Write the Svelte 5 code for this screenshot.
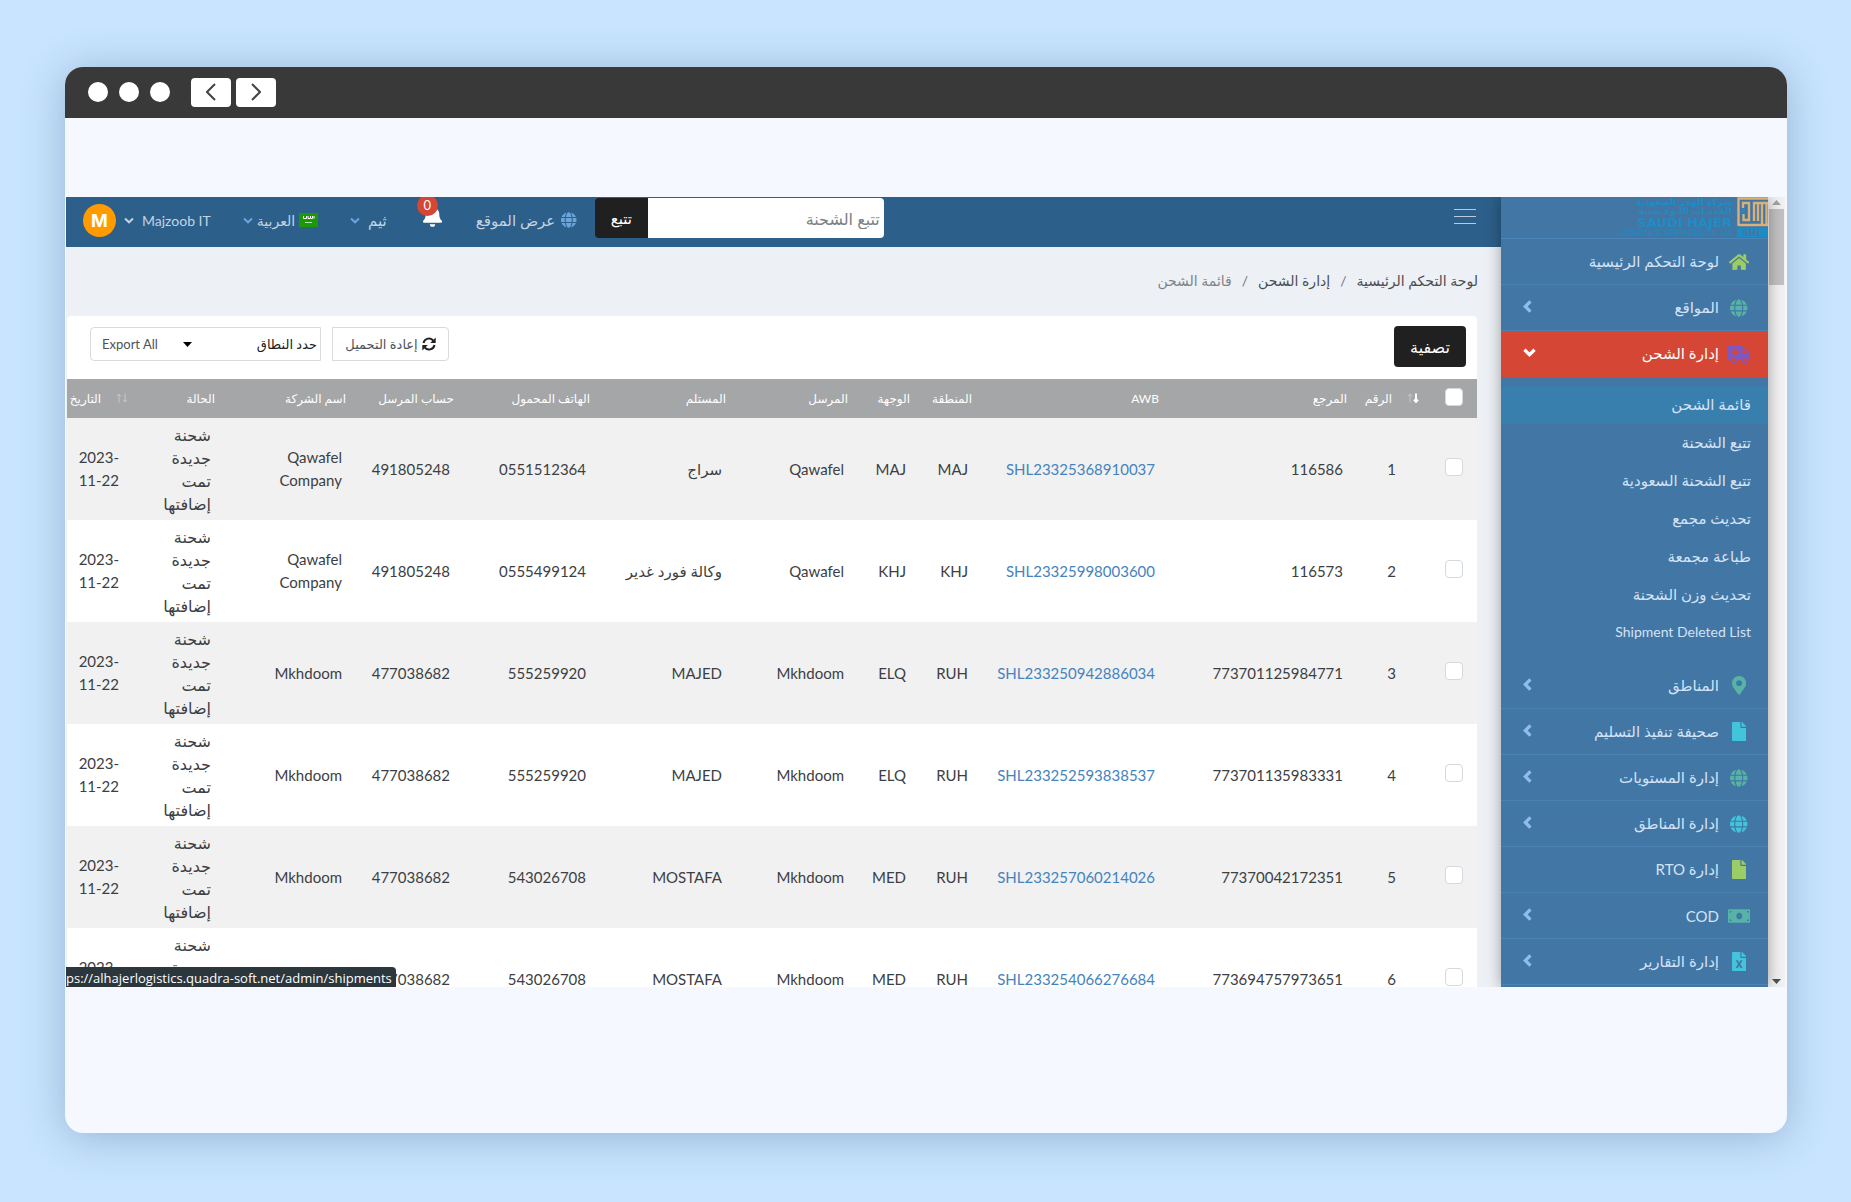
<script>
  const icons = {
    home: { box: '0 0 576 512', d: 'M280.37 148.26L96 300.11V464a16 16 0 0 0 16 16l112.06-.29a16 16 0 0 0 15.92-16V368a16 16 0 0 1 16-16h64a16 16 0 0 1 16 16v95.64a16 16 0 0 0 16 16.05L464 480a16 16 0 0 0 16-16V300L295.67 148.26a12.19 12.19 0 0 0-15.3 0zM571.6 251.47L488 182.56V44.05a12 12 0 0 0-12-12h-56a12 12 0 0 0-12 12v72.61L318.47 43a48 48 0 0 0-61 0L4.34 251.47a12 12 0 0 0-1.6 16.9l25.5 31A12 12 0 0 0 45.15 301l235.22-193.74a12.19 12.19 0 0 1 15.3 0L530.9 301a12 12 0 0 0 16.9-1.6l25.5-31a12 12 0 0 0-1.7-16.93z' },
    globe: { box: '0 0 496 512', d: 'M336.5 160C322 70.7 287.8 8 248 8s-74 62.7-88.5 152h177zM152 256c0 22.2 1.2 43.5 3.3 64h185.3c2.1-20.5 3.3-41.8 3.3-64s-1.2-43.5-3.3-64H155.3c-2.1 20.5-3.3 41.8-3.3 64zm324.7-96c-28.6-67.9-86.5-120.4-158-141.6 24.4 33.8 41.2 84.7 50 141.6h108zM177.2 18.4C105.8 39.6 47.8 92.1 19.3 160h108c8.7-56.9 25.5-107.8 49.9-141.6zM487.4 192H372.7c2.1 21 3.3 42.5 3.3 64s-1.2 43-3.3 64h114.6c5.5-20.5 8.6-41.8 8.6-64s-3.1-43.5-8.5-64zM120 256c0-21.5 1.2-43 3.3-64H8.6C3.2 212.5 0 233.8 0 256s3.2 43.5 8.6 64h114.6c-2-21-3.2-42.5-3.2-64zm39.5 96c14.5 89.3 48.7 152 88.5 152s74-62.7 88.5-152h-177zm159.3 141.6c71.4-21.2 129.4-73.7 158-141.6h-108c-8.8 56.9-25.6 107.8-50 141.6zM19.3 352c28.6 67.9 86.5 120.4 158 141.6-24.4-33.8-41.2-84.7-50-141.6h-108z' },
    ambulance: { box: '0 0 640 512', d: 'M624 352h-16V243.9c0-12.7-5.1-24.9-14.1-33.9L494 110.1c-9-9-21.2-14.1-33.9-14.1H416V48c0-26.5-21.5-48-48-48H48C21.5 0 0 21.5 0 48v320c0 26.5 21.5 48 48 48h16c0 53 43 96 96 96s96-43 96-96h128c0 53 43 96 96 96s96-43 96-96h48c8.8 0 16-7.2 16-16v-32c0-8.8-7.2-16-16-16zM160 464c-26.5 0-48-21.5-48-48s21.5-48 48-48 48 21.5 48 48-21.5 48-48 48zm144-248c0 4.4-3.6 8-8 8h-56v56c0 4.4-3.6 8-8 8h-48c-4.4 0-8-3.6-8-8v-56h-56c-4.4 0-8-3.6-8-8v-48c0-4.4 3.6-8 8-8h56v-56c0-4.4 3.6-8 8-8h48c4.4 0 8 3.6 8 8v56h56c4.4 0 8 3.6 8 8v48zm176 248c-26.5 0-48-21.5-48-48s21.5-48 48-48 48 21.5 48 48-21.5 48-48 48zm80-208H416V144h44.1l99.9 99.9V256z' },
    pin: { box: '0 0 384 512', d: 'M172.268 501.67C26.97 291.031 0 269.413 0 192 0 85.961 85.961 0 192 0s192 85.961 192 192c0 77.413-26.97 99.031-172.268 309.67-9.535 13.774-29.93 13.773-39.464 0zM192 272c44.183 0 80-35.817 80-80s-35.817-80-80-80-80 35.817-80 80 35.817 80 80 80z' },
    file: { box: '0 0 384 512', d: 'M224 136V0H24C10.7 0 0 10.7 0 24v464c0 13.3 10.7 24 24 24h336c13.3 0 24-10.7 24-24V160H248c-13.2 0-24-10.8-24-24zm160-14.1v6.1H256V0h6.1c6.4 0 12.5 2.5 17 7l97.9 98c4.5 4.5 7 10.6 7 16.9z' },
    excel: { box: '0 0 384 512', d: 'M224 136V0H24C10.7 0 0 10.7 0 24v464c0 13.3 10.7 24 24 24h336c13.3 0 24-10.7 24-24V160H248c-13.2 0-24-10.8-24-24zM100 224h56l36 64 36-64h56l-62 100 62 108h-56l-36-68-36 68h-56l62-108zM384 121.9v6.1H256V0h6.1c6.4 0 12.5 2.5 17 7l97.9 98c4.5 4.5 7 10.6 7 16.9z' },
    money: { box: '0 0 640 512', d: 'M32 64h576c18 0 32 14 32 32v320c0 18-14 32-32 32H32c-18 0-32-14-32-32V96c0-18 14-32 32-32zM320 160c-48 0-84 43-84 96s36 96 84 96 84-43 84-96-36-96-84-96zM48 112v52c29 0 52-23 52-52zM592 112h-52c0 29 23 52 52 52zM48 400h52c0-29-23-52-52-52zM592 400v-52c-29 0-52 23-52 52z' },
    bell: { box: '0 0 448 512', d: 'M224 512c35.32 0 63.97-28.65 63.97-64H160.03c0 35.35 28.65 64 63.97 64zm215.39-149.71c-19.32-20.76-55.47-51.99-55.47-154.29 0-77.7-54.48-139.9-127.94-155.16V32c0-17.67-14.32-32-31.98-32s-31.98 14.33-31.98 32v20.84C118.56 68.1 64.08 130.3 64.08 208c0 102.3-36.15 133.53-55.47 154.29-6 6.45-8.66 14.16-8.61 21.71.11 16.4 12.98 32 32.1 32h383.8c19.12 0 32-15.6 32.1-32 .05-7.55-2.61-15.27-8.61-21.71z' }
  };

  const topItems = [
    { label: 'لوحة التحكم الرئيسية', icon: 'home', tone: 'lime', arrow: false },
    { label: 'المواقع', icon: 'globe', tone: 'teal', arrow: true },
    { label: 'إدارة الشحن', icon: 'ambulance', tone: 'violet', arrow: true, active: true }
  ];
  const subItems = ['قائمة الشحن', 'تتبع الشحنة', 'تتبع الشحنة السعودية', 'تحديث مجمع', 'طباعة مجمعة', 'تحديث وزن الشحنة', 'Shipment Deleted List'];
  const bottomItems = [
    { label: 'المناطق', icon: 'pin', tone: 'teal', arrow: true },
    { label: 'صحيفة تنفيذ التسليم', icon: 'file', tone: 'cyan', arrow: true },
    { label: 'إدارة المستويات', icon: 'globe', tone: 'teal', arrow: true },
    { label: 'إدارة المناطق', icon: 'globe', tone: 'cyan', arrow: true },
    { label: 'إدارة RTO', icon: 'file', tone: 'lime', arrow: false },
    { label: 'COD', icon: 'money', tone: 'teal', arrow: true },
    { label: 'إدارة التقارير', icon: 'excel', tone: 'cyan', arrow: true }
  ];

  const statusLines = ['شحنة', 'جديدة', 'تمت', 'إضافتها'];
  const rows = [
    { n: 1, ref: '116586', awb: 'SHL23325368910037', region: 'MAJ', dest: 'MAJ', sender: 'Qawafel', receiver: 'سراج', phone: '0551512364', account: '491805248', company: 'Qawafel Company' },
    { n: 2, ref: '116573', awb: 'SHL23325998003600', region: 'KHJ', dest: 'KHJ', sender: 'Qawafel', receiver: 'وكالة فورد غدير', phone: '0555499124', account: '491805248', company: 'Qawafel Company' },
    { n: 3, ref: '773701125984771', awb: 'SHL233250942886034', region: 'RUH', dest: 'ELQ', sender: 'Mkhdoom', receiver: 'MAJED', phone: '555259920', account: '477038682', company: 'Mkhdoom' },
    { n: 4, ref: '773701135983331', awb: 'SHL233252593838537', region: 'RUH', dest: 'ELQ', sender: 'Mkhdoom', receiver: 'MAJED', phone: '555259920', account: '477038682', company: 'Mkhdoom' },
    { n: 5, ref: '77370042172351', awb: 'SHL233257060214026', region: 'RUH', dest: 'MED', sender: 'Mkhdoom', receiver: 'MOSTAFA', phone: '543026708', account: '477038682', company: 'Mkhdoom' },
    { n: 6, ref: '773694757973651', awb: 'SHL233254066276684', region: 'RUH', dest: 'MED', sender: 'Mkhdoom', receiver: 'MOSTAFA', phone: '543026708', account: '477038682', company: 'Mkhdoom' }
  ];
</script>

{#snippet icon(name)}
  <svg class="icon" viewBox={icons[name].box} aria-hidden="true"><path fill-rule="evenodd" d={icons[name].d} /></svg>
{/snippet}

{#snippet down()}
  <svg class="down" viewBox="0 0 10 7" aria-hidden="true"><path d="M1 1.500 5 5.300l4-3.800" /></svg>
{/snippet}

{#snippet sort(cls)}
  <svg class="sort {cls}" viewBox="0 0 12 10" aria-hidden="true">
    <path class="up" d="M3 9.500V1M1 3.300 3 1l2 2.300" />
    <path class="dn" d="M9 .5V9M7 6.700 9 9l2-2.300" />
  </svg>
{/snippet}

{#snippet item(it)}
  <a class="item" class:active={it.active} href="#menu">
    <span class="ico {it.tone} {it.icon}">{@render icon(it.icon)}</span>
    <span class="lbl">{it.label}</span>
    {#if it.active}
      <svg class="arrow open" viewBox="0 0 12 8" aria-hidden="true"><path d="M1.300 1.500 6 6l4.700-4.500" /></svg>
    {:else if it.arrow}
      <svg class="arrow" viewBox="0 0 8 12" aria-hidden="true"><path d="M6.700 1.200 2 6l4.700 4.800" /></svg>
    {/if}
  </a>
{/snippet}

<div class="stage">
  <div class="window">
    <div class="titlebar">
      <i class="dot"></i><i class="dot"></i><i class="dot"></i>
      <button class="hist first" aria-label="Back"><svg viewBox="0 0 10 18"><path d="M9 1 1 9l8 8" /></svg></button>
      <button class="hist" aria-label="Forward"><svg viewBox="0 0 10 18"><path d="m1 1 8 8-8 8" /></svg></button>
    </div>

    <div class="body">
      <div class="app" dir="rtl">
        <div class="scroll">
          <svg viewBox="0 0 9 5"><path fill="#a3a3a3" d="M0 5 4.500 0 9 5z" /></svg>
          <span class="thumb"></span>
          <svg class="end" viewBox="0 0 9 5"><path fill="#505050" d="M0 0h9L4.500 5z" /></svg>
        </div>

        <aside class="sidebar">
          <div class="logo">
            <svg class="mark" viewBox="0 0 31 40" aria-hidden="true">
              <g fill="none" stroke="#d9b078" stroke-width="2.400">
                <path d="M1.500 29V1.500H31M6 11V6h6v16M1.500 28H31M12 18v5H6.500v-6M17 24V6h4v18M25 28V6M29.500 6v22M20 6h11" />
              </g>
              <path fill="#1e8cc4" d="M4 12h4v4H4zM0 31h31v9H0z" />
              <text x="15" y="39" text-anchor="middle" font-size="9" font-weight="700" fill="#4276a4" font-family="DejaVu Sans">SHL</text>
            </svg>
            <div class="brand">
              <span class="ar">شركة الهجر السعودية</span>
              <span class="ar">للخدمـات اللـوجـستية</span>
              <b>SAUDI HAJER</b>
              <small dir="ltr">LOGISTICS SERVICES Co. Ltd</small>
            </div>
          </div>
          {#each topItems as it}{@render item(it)}{/each}
          <div class="sub">
            {#each subItems as s, i}<a href="#sub" class:current={i === 0} class:latin={i === 6}>{s}</a>{/each}
          </div>
          {#each bottomItems as it}{@render item(it)}{/each}
        </aside>

        <main class="main">
          <header class="nav">
            <button class="burger" aria-label="القائمة"><i></i><i></i><i></i></button>
            <form class="search" onsubmit={(e) => e.preventDefault()}>
              <input type="text" placeholder="تتبع الشحنة" aria-label="تتبع الشحنة" />
              <button>تتبع</button>
            </form>
            <a class="link site" href="#site">{@render icon('globe')}عرض الموقع</a>
            <button class="bell" aria-label="الإشعارات">{@render icon('bell')}<span class="badge">0</span></button>
            <button class="link">ثيم{@render down()}</button>
            <button class="link lang">
              <svg class="flag" viewBox="0 0 19 14" aria-hidden="true"><path fill="#1b9a06" d="M0 0h19v14H0z" /><path fill="none" stroke="#fff" d="M4.500 3v2.500h3V3M9 3v2.500h2M11.500 3v2.500h2V3M15 3v2.500" /><path stroke="#b6e0b0" d="M6 9.500h7" /></svg>
              العربية{@render down()}
            </button>
            <button class="link user" dir="ltr"><span class="avatar">M</span>{@render down()}Majzoob IT</button>
          </header>

          <nav class="crumbs" aria-label="breadcrumb">
            <a href="#home">لوحة التحكم الرئيسية</a><span class="sep">/</span><a href="#ship">إدارة الشحن</a><span class="sep">/</span><span class="here">قائمة الشحن</span>
          </nav>

          <section class="card">
            <div class="tools">
              <button class="filter">تصفية</button>
              <button class="reload">
                <svg viewBox="0 0 14 14" aria-hidden="true"><path fill="none" stroke="#222" stroke-width="2" d="M1.500 6A5.600 5.600 0 0 1 11.500 3.800M12.500 8A5.600 5.600 0 0 1 2.500 10.200" /><path fill="#222" d="M13.700.5v5.600H8.200zM.3 13.500V7.900h5.500z" /></svg>
                إعادة التحميل
              </button>
              <div class="range">
                <select aria-label="حدد النطاق"><option>حدد النطاق</option></select>
                <svg viewBox="0 0 9 5" aria-hidden="true"><path d="M0 0h9L4.500 5z" /></svg>
                <button>Export All</button>
              </div>
            </div>

            <table>
              <colgroup>
                <col class="c-check" /><col class="c-num" /><col class="c-ref" /><col class="c-awb" /><col class="c-code" /><col class="c-code" /><col class="c-sender" /><col class="c-phone" /><col class="c-phone" /><col class="c-acc" /><col class="c-comp" /><col class="c-stat" /><col class="c-date" />
              </colgroup>
              <thead>
                <tr>
                  <th class="check"><input type="checkbox" aria-label="تحديد الكل" /></th>
                  <th>{@render sort('desc')}الرقم</th>
                  <th>المرجع</th><th>AWB</th><th>المنطقة</th><th>الوجهة</th><th>المرسل</th><th>المستلم</th><th>الهاتف المحمول</th><th>حساب المرسل</th><th>اسم الشركة</th><th>الحالة</th>
                  <th class="last">{@render sort('')}التاريخ</th>
                </tr>
              </thead>
              <tbody>
                {#each rows as r}
                  <tr>
                    <td class="check"><input type="checkbox" aria-label={'تحديد ' + r.n} /></td>
                    <td class="num">{r.n}</td>
                    <td>{r.ref}</td>
                    <td><a href="#awb">{r.awb}</a></td>
                    <td>{r.region}</td>
                    <td>{r.dest}</td>
                    <td>{r.sender}</td>
                    <td>{r.receiver}</td>
                    <td>{r.phone}</td>
                    <td>{r.account}</td>
                    <td class="company">{r.company}</td>
                    <td class="state">{#each statusLines as l}<span class="line">{l}</span>{/each}</td>
                    <td class="date"><span class="line" dir="ltr">2023-</span><span class="line" dir="ltr">11-22</span></td>
                  </tr>
                {/each}
              </tbody>
            </table>
          </section>
        </main>
        <div class="status" dir="ltr">ps://alhajerlogistics.quadra-soft.net/admin/shipments</div>
      </div>
    </div>
  </div>
</div>

<style>
  :global(body) { background: #c8e4fe; }
  .stage { box-sizing: border-box; height: 100vh; padding: 67px 64px 69px 65px; font-family: Lato, "DejaVu Sans", sans-serif; }
  .stage * { box-sizing: border-box; }
  button, input, select { font-family: inherit; margin: 0; }
  button { border: 0; background: none; padding: 0; cursor: pointer; }
  a { text-decoration: none; color: inherit; }
  svg { display: block; flex: none; }
  .icon { fill: currentColor; height: 16px; }

  .window { height: 100%; display: flex; flex-direction: column; border-radius: 18px; overflow: hidden; background: #f5f8ff; box-shadow: 0 4px 40px rgba(60, 95, 135, .36); }
  .titlebar { flex: none; height: 51px; background: #393939; display: flex; align-items: center; gap: 11px; padding: 0 0 1px 23px; }
  .dot { width: 20px; height: 20px; border-radius: 50%; background: #fff; }
  .hist { width: 40px; height: 29px; border-radius: 4px; background: #fff; display: grid; place-items: center; margin-left: -6px; }
  .hist.first { margin-left: 10px; }
  .hist svg { width: 10px; height: 18px; fill: none; stroke: #444; stroke-width: 2; }
  .body { flex: 1; min-height: 0; display: flex; padding: 79px 2px 146px 1px; }

  .app { flex: 1; min-width: 0; display: flex; position: relative; overflow: hidden; background: #edf1f6; }
  .scroll { flex: none; width: 17px; background: #f1f1f1; display: flex; flex-direction: column; align-items: center; padding: 2px 0; }
  .scroll svg { width: 9px; height: 5px; margin: 1px 0 4px; }
  .thumb { width: 15px; height: 76px; background: #c1c1c1; }
  .scroll svg.end { margin: auto 0 1px; }

  .sidebar { flex: none; width: 267px; background: #4276a4; color: #d3e3f7; box-shadow: 0 0 14px rgba(0, 0, 0, .35); z-index: 1; }
  .logo { height: 42px; display: flex; gap: 5px; border-bottom: 1px solid #4a84b8; overflow: hidden; }
  .mark { width: 31px; height: 40px; }
  .brand { display: flex; flex-direction: column; align-items: flex-start; padding-top: 1px; color: #1e8cc4; white-space: nowrap; }
  .brand .ar { font: 700 9px/9px "DejaVu Sans", sans-serif; }
  .brand b { font: 700 13px/13px "DejaVu Sans", sans-serif; }
  .brand small { font: 8px/8px "Liberation Sans", sans-serif; }
  .item { display: flex; align-items: center; height: 46px; padding: 0 17px 0 22px; border-bottom: 1px solid #4a82b3; font-size: 15px; }
  .item.active { background: #d54634; border-color: #d54634; color: #fff; }
  .ico { width: 24px; height: 20px; margin-left: 8px; display: grid; place-items: center; }
  .ico .icon { height: 18px; width: auto; }
  .ico.pin .icon, .ico.file .icon, .ico.excel .icon { height: 19px; }
  .lime { color: #9ccc65; }
  .teal { color: #56b3a6; }
  .violet { color: #7e57c2; }
  .cyan { color: #42c5dc; }
  .lbl { flex: 1; }
  .arrow { width: 9px; height: 13px; margin-bottom: 3px; fill: none; stroke: #8fbce8; stroke-width: 3; }
  .arrow.open { width: 13px; height: 9px; stroke: #fff; }
  .sub { padding: 9px 0 11px; }
  .sub a { display: block; padding: 0 17px 2px; font-size: 15px; line-height: 36px; }
  .sub a.latin { font-size: 14px; }
  .sub a.current { background: #387fae; }

  .main { flex: 1; min-width: 0; }
  .nav { height: 50px; background: #2c5f8a; display: flex; align-items: center; padding: 0 25px 12px 17px; color: #c3d3e3; }
  .burger { width: 22px; display: flex; flex-direction: column; gap: 6px; margin-left: auto; }
  .burger i { height: 1px; background: #b9cbdc; }
  .search { display: flex; width: 289px; height: 40px; margin-top: 4px; border-radius: 4px; overflow: hidden; }
  .search input { flex: 1; min-width: 0; border: 0; padding: 0 4px; font-size: 16px; color: #555; background: #fff; }
  .search input::placeholder { color: #7d8084; opacity: 1; }
  .search button { width: 53px; background: #202020; color: #fff; font-size: 15px; }
  .link { display: flex; align-items: center; gap: 8px; height: 32px; margin: 8px 32px 0 0; color: inherit; font-size: 15px; white-space: nowrap; }
  .link.site { margin-right: 18px; gap: 6px; }
  .site .icon { color: #6ba5dc; }
  .lang { gap: 4px; font-size: 14px; }
  .user { gap: 8px; font-size: 14px; }
  .down { width: 10px; height: 7px; fill: none; stroke: #6ba5dc; stroke-width: 2; }
  .user .down { stroke: #c3d3e3; }
  .flag { width: 19px; height: 14px; }
  .avatar { width: 33px; height: 33px; border-radius: 50%; background: #ff9b00; color: #fff; font: 700 18px/33px Inter, sans-serif; text-align: center; }
  .bell { position: relative; margin: 0 34px 0 0; color: #fff; }
  .bell + .link { margin-right: 36px; }
  .bell .icon { width: 19px; height: 22px; }
  .badge { position: absolute; top: -10px; left: -6px; width: 21px; height: 21px; border-radius: 50%; background: #d54634; font-size: 13px; line-height: 20px; }

  .crumbs { height: 69px; display: flex; align-items: center; padding: 0 23px 2px 0; font-size: 14px; color: #4a4e53; }
  .sep { margin: 0 10px; color: #6d7278; }
  .here { color: #7e848a; }

  .card { margin: 0 24px 0 1px; background: #fff; border-radius: 4px 4px 0 0; }
  .tools { display: flex; align-items: flex-start; height: 63px; padding: 10px 11px 0 23px; }
  .filter { width: 72px; height: 41px; border-radius: 4px; background: #202020; color: #fff; font-size: 16px; margin-left: auto; }
  .reload, .range { height: 34px; margin-top: 1px; border: 1px solid #d8dadc; display: flex; align-items: center; font-size: 13px; background: #fff; }
  .reload { width: 117px; justify-content: center; gap: 4px; border-radius: 0 4px 4px 0; color: #4f5357; white-space: nowrap; }
  .reload svg { width: 14px; height: 14px; }
  .range { width: 231px; margin-right: 11px; border-radius: 4px 0 0 4px; }
  .range select { appearance: none; border: 0; background: none; font-size: 13px; color: #222; width: 128px; padding: 0 3px; height: 32px; }
  .range svg { width: 9px; height: 5px; }
  .range button { flex: 1; height: 32px; padding-left: 11px; text-align: left; font-size: 13px; color: #4f5357; }

  table { width: 100%; table-layout: fixed; border-collapse: collapse; color: #3c4043; }
  .c-check { width: 50px; } .c-num { width: 72px; } .c-ref { width: 188px; } .c-awb { width: 187px; } .c-code { width: 62px; }
  .c-sender { width: 122px; } .c-phone { width: 136px; } .c-acc { width: 108px; } .c-comp { width: 131px; } .c-stat { width: 92px; } .c-date { width: 64px; }
  th { height: 39px; padding: 0 8px 0 0; background: #a4a6a8; color: #fff; font-size: 12px; font-weight: 400; text-align: right; white-space: nowrap; }
  th.last { padding-right: 3px; }
  .sort { display: inline-block; width: 12px; height: 10px; margin-left: 15px; fill: none; stroke: #c6c8ca; stroke-width: 1; }
  .sort.desc .dn { stroke: #fff; stroke-width: 2; }
  td { height: 102px; padding: 5px 12px 5px 0; font-size: 15px; line-height: 23px; text-align: right; vertical-align: middle; white-space: nowrap; }
  td.num { padding-right: 31px; }
  td.company { white-space: normal; padding-left: 40px; }
  td.state { font-size: 16px; }
  tbody tr:nth-child(odd) { background: #f1f1f1; }
  td a { color: #4583be; }
  .line { display: block; }
  .check { padding: 0 14px 4px 0; }
  .check input { appearance: none; display: block; width: 18px; height: 18px; border: 1px solid #d3d9df; border-radius: 4px; background: #fff; }

  .status { position: absolute; left: 0; bottom: 0; width: 330px; height: 20px; overflow: hidden; background: #2b363d; color: #fff; font: 13px/23px "Open Sans", sans-serif; white-space: nowrap; border-radius: 0 4px 0 0; z-index: 2; }
</style>
